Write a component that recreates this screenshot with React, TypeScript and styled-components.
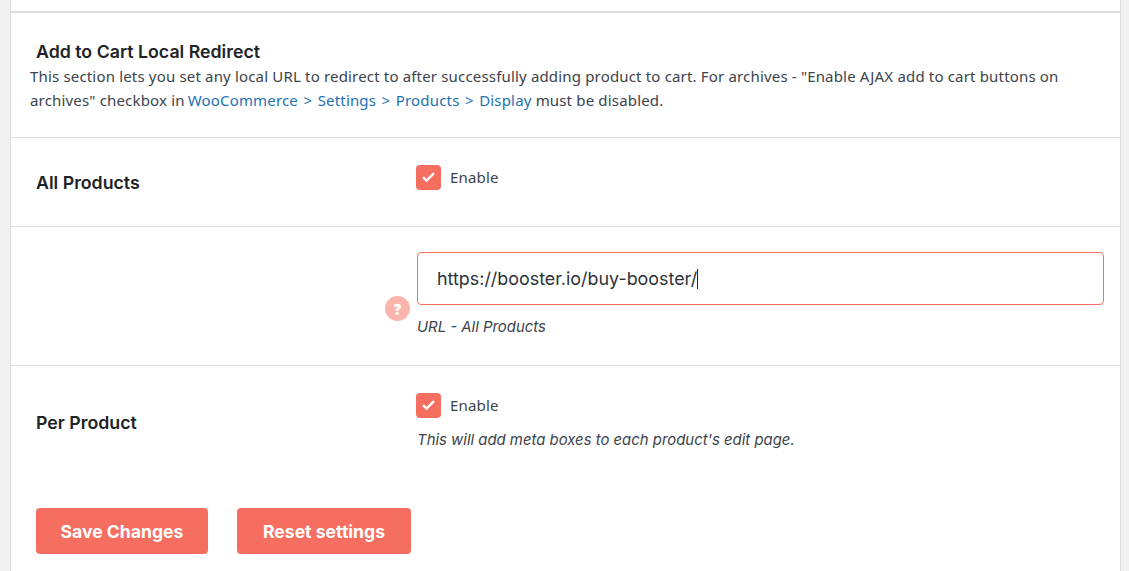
import { createGlobalStyle, styled } from "styled-components";

const GlobalStyle = createGlobalStyle`
  html, body {
    margin: 0;
    padding: 0;
    background: #f0f0f1;
    height: 571px;
    overflow: hidden;
  }
  * { box-sizing: border-box; }
`;

const Page = styled.div`
  width: 1129px;
  height: 571px;
  padding: 0 8px 0 10px;
  background: #f0f0f1;
  font-family: "Noto Sans", sans-serif;
  font-size: 15px;
  letter-spacing: 0.17px;
  color: #3c434a;
  overflow: hidden;
`;
const Panel = styled.div`
  background: #fff;
  border-left: 1px solid #dcdcde;
  border-right: 1px solid #dcdcde;
  height: 571px;
  padding-top: 11px;
`;
const Intro = styled.div`
  border-top: 2px solid #dcdcde;
  height: 127px;
  padding: 27px 0 0 19px;
  border-bottom: 1px solid #dcdcde;
`;
const Title = styled.h2`
  margin: 0 0 0 6px;
  font-family: Inter, sans-serif;
  font-size: 17.75px;
  font-weight: 600;
  letter-spacing: 0;
  line-height: 24px;
  color: #1d2327;
`;
const Desc = styled.p`
  margin: 0;
  line-height: 24px;
`;
const Link = styled.a`
  color: #2271b1;
  word-spacing: 1.4px;
  margin-left: -1px;
`;
const Row = styled.div<{ $h: number; $line?: boolean }>`
  display: flex;
  height: ${(p) => p.$h}px;
  border-bottom: ${(p) => (p.$line ? "1px solid #dcdcde" : "none")};
`;
const Label = styled.div<{ $top: number }>`
  width: 405px;
  padding: ${(p) => p.$top}px 0 0 25px;
  font-family: Inter, sans-serif;
  font-size: 17.75px;
  font-weight: 600;
  letter-spacing: 0;
  line-height: 24px;
  color: #1d2327;
`;
const Field = styled.div<{ $top: number }>`
  flex: 1;
  padding-top: ${(p) => p.$top}px;
`;
const CheckLine = styled.label`
  display: flex;
  align-items: center;
  gap: 9px;
  height: 26px;
  line-height: 24px;
`;
const Box = styled.span`
  width: 25px;
  height: 25px;
  border-radius: 4px;
  background: #f66e60;
  display: flex;
  align-items: center;
  justify-content: center;
`;
const UrlWrap = styled.div`
  position: relative;
  width: 687px;
  margin-left: 1px;
`;
const UrlBox = styled.div`
  height: 53px;
  border: 1px solid #f66e60;
  border-radius: 4px;
  padding-left: 19px;
  display: flex;
  align-items: center;
  font-family: Inter, sans-serif;
  font-size: 17.9px;
  letter-spacing: 0;
  color: #2c3338;
`;
const Caret = styled.span`
  width: 1px;
  height: 20px;
  background: #1d2327;
`;
const Help = styled.span`
  position: absolute;
  left: -32px;
  top: 44px;
  width: 25px;
  height: 25px;
  border-radius: 50%;
  background: #fcb5ad;
  color: #fff;
  font-family: "Open Sans", sans-serif;
  font-weight: 800;
  font-size: 15px;
  letter-spacing: 0;
  display: flex;
  align-items: center;
  justify-content: center;
`;
const Note = styled.p<{ $top: number }>`
  margin: ${(p) => p.$top}px 0 0 1px;
  font-family: Inter, sans-serif;
  font-size: 14.9px;
  font-style: italic;
  letter-spacing: 0;
  line-height: 24px;
`;
const Actions = styled.div`
  display: flex;
  gap: 29px;
  padding: 23px 0 0 25px;
`;
const Button = styled.button<{ $w: number }>`
  width: ${(p) => p.$w}px;
  height: 46px;
  border: none;
  border-radius: 4px;
  background: #f66e60;
  color: #fff;
  font-family: Inter, sans-serif;
  font-size: 17.6px;
  font-weight: 700;
  padding: 0;
`;

function Check() {
  return (
    <Box>
      <svg width="15" height="12" viewBox="0 0 15 12" fill="none">
        <path d="M2 6.2 L5.6 9.6 L13 2.2" stroke="#fff" strokeWidth="2.4" />
      </svg>
    </Box>
  );
}

export default function App() {
  return (
    <Page>
      <GlobalStyle />
      <Panel>
        <Intro>
          <Title>Add to Cart Local Redirect</Title>
          <Desc>
            This section lets you set any local URL to redirect to after successfully adding product to cart. For archives - "Enable AJAX add to cart buttons on
            <br />
            archives" checkbox in <Link>WooCommerce &gt; Settings &gt; Products &gt; Display</Link> must be disabled.
          </Desc>
        </Intro>
        <Row $h={89} $line>
          <Label $top={33}>All Products</Label>
          <Field $top={26}>
            <CheckLine>
              <Check />
              Enable
            </CheckLine>
          </Field>
        </Row>
        <Row $h={139} $line>
          <Label $top={0} />
          <Field $top={25}>
            <UrlWrap>
              <UrlBox>
                https://booster.io/buy-booster/
                <Caret />
              </UrlBox>
              <Help>?</Help>
            </UrlWrap>
            <Note $top={10}>URL - All Products</Note>
          </Field>
        </Row>
        <Row $h={119}>
          <Label $top={45}>Per Product</Label>
          <Field $top={26}>
            <CheckLine>
              <Check />
              Enable
            </CheckLine>
            <Note $top={10}>This will add meta boxes to each product's edit page.</Note>
          </Field>
        </Row>
        <Actions>
          <Button $w={172}>Save Changes</Button>
          <Button $w={174}>Reset settings</Button>
        </Actions>
      </Panel>
    </Page>
  );
}
